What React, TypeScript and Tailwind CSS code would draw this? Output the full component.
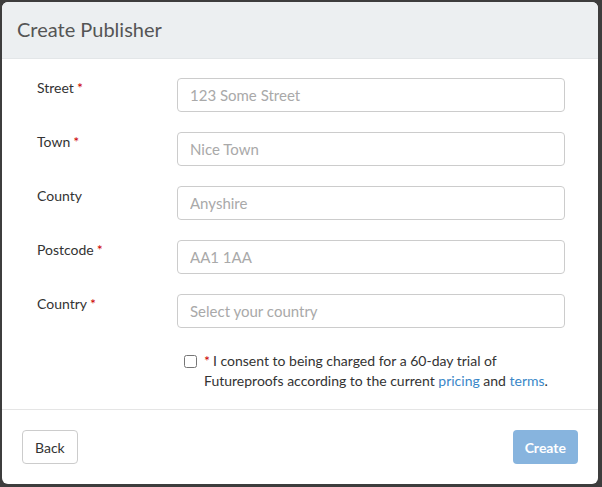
const fields = [
  { label: 'Street', required: true, placeholder: '123 Some Street' },
  { label: 'Town', required: true, placeholder: 'Nice Town' },
  { label: 'County', required: false, placeholder: 'Anyshire' },
  { label: 'Postcode', required: true, placeholder: 'AA1 1AA' },
  { label: 'Country', required: true, placeholder: 'Select your country' },
];

const Req = () => <span className="ml-[3px] text-[#cc0000]">*</span>;

export default function App() {
  return (
    <div className="h-[487px] w-[602px] bg-[#3d3d3d] pl-[2px] pt-[2px] font-['Lato','Open_Sans',sans-serif]">
      <div className="flex h-[482px] w-[596px] flex-col overflow-hidden rounded-[6px] bg-white">
        <div className="flex h-[57px] shrink-0 items-center border-b border-[#e3e6e8] bg-[#eceff1] pb-[3px] pl-[15px]">
          <h2 className="text-[20px] leading-[24px] text-[#555]">Create Publisher</h2>
        </div>
        <div className="flex flex-col pl-[35px] pr-[31px] pt-[19px]">
          {fields.map((f) => (
            <div key={f.label} className="mb-[20px] flex items-start">
              <label className="w-[140px] shrink-0 text-[14px] leading-[20px] text-[#333]">
                {f.label}
                {f.required ? <Req /> : null}
              </label>
              <input
                placeholder={f.placeholder}
                className="h-[34px] w-[388px] shrink-0 rounded-[4px] border border-[#ccc] px-[12px] text-[15px] text-[#333] outline-none placeholder:text-[#a9a9a9]"
              />
            </div>
          ))}
          <div className="mt-[3px] flex items-start pl-[147px]">
            <input type="checkbox" className="mt-[4px] h-[13px] w-[13px] shrink-0 accent-white" />
            <p className="ml-[7px] text-[14px] leading-[20px] text-[#333]">
              <span className="mr-[3px] text-[#cc0000]">*</span>I consent to being charged for a 60-day trial of
              <br />
              Futureproofs according to the current <a className="text-[#3a87c8]">pricing</a> and{' '}
              <a className="text-[#3a87c8]">terms</a>.
            </p>
          </div>
        </div>
        <div className="mt-auto flex h-[75px] items-center justify-between border-t border-[#e5e5e5] px-[20px]">
          <button className="h-[34px] rounded-[4px] border border-[#ccc] bg-white px-[12px] text-[14px] text-[#333]">
            Back
          </button>
          <button className="h-[34px] rounded-[4px] bg-[#87b4de] px-[12px] text-[14px] font-bold text-white">
            Create
          </button>
        </div>
      </div>
    </div>
  );
}
